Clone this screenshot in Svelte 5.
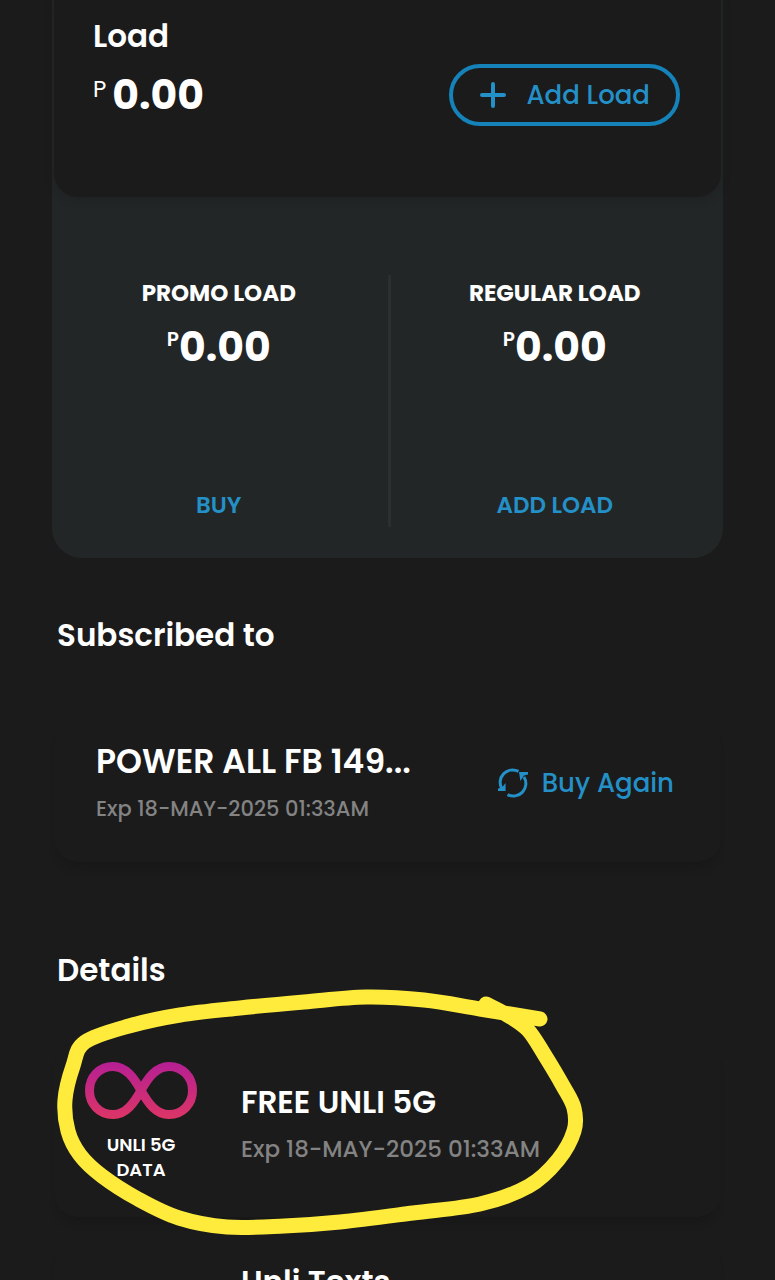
<script lang="ts">
	const balances = [
		{ label: 'PROMO LOAD', amount: '0.00', action: 'BUY' },
		{ label: 'REGULAR LOAD', amount: '0.00', action: 'ADD LOAD' },
	];

	const promo = { name: 'POWER ALL FB 149...', expiry: 'Exp 18-MAY-2025 01:33AM' };

	// points of the highlight stroke, relative to the marker svg
	const stroke = [
		[486, 31], [426, 21], [370, 12], [312, 9], [250, 14], [186, 20], [126, 27],
		[75, 38], [31, 54], [19, 78], [11, 112], [14, 143], [26, 167], [48, 188],
		[84, 211], [125, 230], [173, 239], [230, 238], [286, 234], [359, 225],
		[426, 216], [475, 198], [504, 172], [520, 143], [520, 120], [509, 98],
		[490, 66], [474, 42], [455, 28], [432, 16],
	];

	function smooth(pts: number[][]) {
		let d = `M${pts[0]}`;
		for (let i = 0; i < pts.length - 1; i++) {
			const a = pts[i - 1] ?? pts[i];
			const b = pts[i];
			const c = pts[i + 1];
			const e = pts[i + 2] ?? c;
			d += `C${b[0] + (c[0] - a[0]) / 6} ${b[1] + (c[1] - a[1]) / 6} `;
			d += `${c[0] - (e[0] - b[0]) / 6} ${c[1] - (e[1] - b[1]) / 6} ${c[0]} ${c[1]}`;
		}
		return d;
	}
</script>

<main class="page">
	<section class="wallet">
		<div class="wallet-top">
			<div>
				<h2 class="wallet-title">Load</h2>
				<p class="amount main-amount"><span class="peso">P</span>0.00</p>
			</div>
			<button class="add-load">
				<svg width="28" height="28" viewBox="0 0 28 28" aria-hidden="true">
					<path d="M14 3v22M3 14h22" />
				</svg>
				Add Load
			</button>
		</div>

		<div class="balances">
			{#each balances as b}
				<div class="balance">
					<h3>{b.label}</h3>
					<p class="amount"><span class="peso">P</span>{b.amount}</p>
					<button class="text-btn">{b.action}</button>
				</div>
			{/each}
		</div>
	</section>

	<h2 class="section-title subscribed-title">Subscribed to</h2>
	<article class="card promo">
		<div class="info">
			<h3 class="large">{promo.name}</h3>
			<p class="small">{promo.expiry}</p>
		</div>
		<button class="buy-again">
			<svg width="30" height="30" viewBox="0 0 30 30" aria-hidden="true">
				<path class="arc" d="M20.500 3.400A12.500 12.500 0 0 0 4 21M9.500 26.600A12.500 12.500 0 0 0 26 9" />
				<path class="head" d="M0 20.500L4 19.500L7.600 15V23H0zM30 4V6.500L26 7.500L22.400 13L21 4z" />
			</svg>
			Buy Again
		</button>
	</article>

	<h2 class="section-title details-title">Details</h2>
	<article class="card detail">
		<div class="badge">
			<svg width="112" height="57" viewBox="0 0 112 57" aria-hidden="true">
				<defs>
					<linearGradient id="loop" gradientUnits="userSpaceOnUse" x1="0" y1="0" x2="0" y2="57">
						<stop offset="0" stop-color="#b51f94" />
						<stop offset="1" stop-color="#dc3566" />
					</linearGradient>
				</defs>
				<path
					d="M56 28.500C49 16 41 4.500 28 4.500C14.500 4.500 4.500 15 4.500 28.500S14.500 52.500 28 52.500C41 52.500 49 41 56 28.500S71 4.500 84 4.500C97.500 4.500 107.500 15 107.500 28.500S97.500 52.500 84 52.500C71 52.500 63 41 56 28.500Z"
				/>
			</svg>
			<span>UNLI 5G<br />DATA</span>
		</div>
		<div class="info">
			<h3>FREE UNLI 5G</h3>
			<p>Exp 18-MAY-2025 01:33AM</p>
		</div>

		<!-- hand-drawn highlight -->
		<svg class="marker" width="540" height="260" viewBox="0 0 540 260" aria-hidden="true">
			<path d={smooth(stroke)} />
		</svg>
	</article>
	<article class="card detail next">
		<div class="info">
			<h3>Unli Texts</h3>
		</div>
	</article>
</main>

<style>
	:global(body) {
		margin: 0;
		background: #1b1b1b;
	}

	.page {
		box-sizing: border-box;
		height: 100vh;
		overflow: hidden;
		padding: 0 52px;
		background: #1b1b1b;
		color: #fff;
		font-family: Poppins, Inter, 'Open Sans', sans-serif;
	}

	h2, h3, p {
		margin: 0;
	}

	button {
		margin: 0;
		padding: 0;
		border: 0;
		background: none;
		color: #2490c8;
		font: inherit;
		cursor: pointer;
	}

	svg {
		flex: none;
		fill: none;
	}

	.wallet {
		background: #222627;
		border-radius: 0 0 30px 30px;
	}

	.wallet-top {
		display: flex;
		align-items: flex-end;
		justify-content: space-between;
		margin: 0 2px;
		padding: 16px 41px 71px 39px;
		background: #1b1b1b;
		border-radius: 0 0 24px 24px;
		box-shadow: 0 2px 8px rgba(27, 27, 27, 0.4);
	}

	.wallet-title {
		margin-bottom: 8px;
		font-size: 31px;
		font-weight: 600;
		line-height: 40px;
	}

	.amount {
		display: flex;
		align-items: flex-start;
		justify-content: center;
		font-size: 41px;
		font-weight: 700;
		line-height: 60px;
	}

	.main-amount {
		justify-content: flex-start;
		gap: 6px;
		line-height: 62px;
	}

	.peso {
		font-size: 20px;
		font-weight: 600;
		line-height: 44px;
	}

	.main-amount .peso {
		font-size: 23px;
		font-weight: 400;
		line-height: 50px;
	}

	.add-load {
		display: flex;
		align-items: center;
		gap: 19px;
		padding: 0 26px;
		border: 4px solid #1583b9;
		border-radius: 32px;
		font-size: 26px;
		font-weight: 500;
		line-height: 54px;
	}

	.add-load path {
		stroke: #2490c8;
		stroke-width: 4;
		stroke-linecap: round;
	}

	.balances {
		display: grid;
		grid-template-columns: 1fr 1fr;
		padding: 78px 0 31px;
	}

	.balance {
		display: flex;
		flex-direction: column;
		align-items: center;
		padding-right: 4px;
	}

	.balance:first-child {
		padding-right: 2px;
	}

	.balance + .balance {
		border-left: 3px solid #2b2f30;
	}

	.balance h3 {
		margin-bottom: 6px;
		font-size: 23px;
		font-weight: 700;
		line-height: 36px;
	}

	.text-btn {
		margin-top: 106px;
		font-size: 23px;
		font-weight: 600;
		line-height: 44px;
	}

	.section-title {
		padding-left: 5px;
		font-size: 31px;
		font-weight: 600;
		line-height: 44px;
	}

	.subscribed-title {
		margin: 55px 0 63px;
	}

	.details-title {
		margin: 86px 0 50px;
	}

	.card {
		position: relative;
		display: flex;
		margin: 0 2px;
		background: #1b1b1b;
		border-radius: 24px;
		box-shadow: 0 10px 10px -6px rgba(18, 18, 18, 0.4);
	}

	.info h3 {
		margin-bottom: 9px;
		font-size: 31px;
		font-weight: 600;
		line-height: 44px;
	}

	.info .large {
		font-size: 33px;
	}

	.info p {
		color: #838383;
		font-size: 23px;
		font-weight: 500;
		line-height: 32px;
	}

	.info .small {
		font-size: 21px;
	}

	.promo {
		align-items: center;
		justify-content: space-between;
		padding: 20px 47px 37px 42px;
	}

	.buy-again {
		display: flex;
		align-items: center;
		gap: 14px;
		font-size: 26px;
		font-weight: 500;
		line-height: 36px;
	}

	.arc {
		stroke: #2490c8;
		stroke-width: 3;
	}

	.head {
		fill: #2490c8;
	}

	.detail {
		gap: 44px;
		padding: 20px 31px 35px;
	}

	.detail .info {
		padding-top: 18px;
	}

	.badge {
		display: flex;
		flex-direction: column;
		align-items: center;
		gap: 13px;
		font-size: 18px;
		font-weight: 600;
		line-height: 25px;
		text-align: center;
	}

	.badge path {
		stroke: url(#loop);
		stroke-width: 9;
	}

	.marker {
		position: absolute;
		top: -54px;
		left: 0;
		z-index: 1;
		pointer-events: none;
	}

	.marker path {
		stroke: #ffeb3b;
		stroke-width: 15;
		stroke-linecap: round;
		stroke-linejoin: round;
	}

	.next {
		margin-top: 23px;
		padding-left: 187px;
	}

	.next .info {
		padding-top: 0;
	}
</style>
